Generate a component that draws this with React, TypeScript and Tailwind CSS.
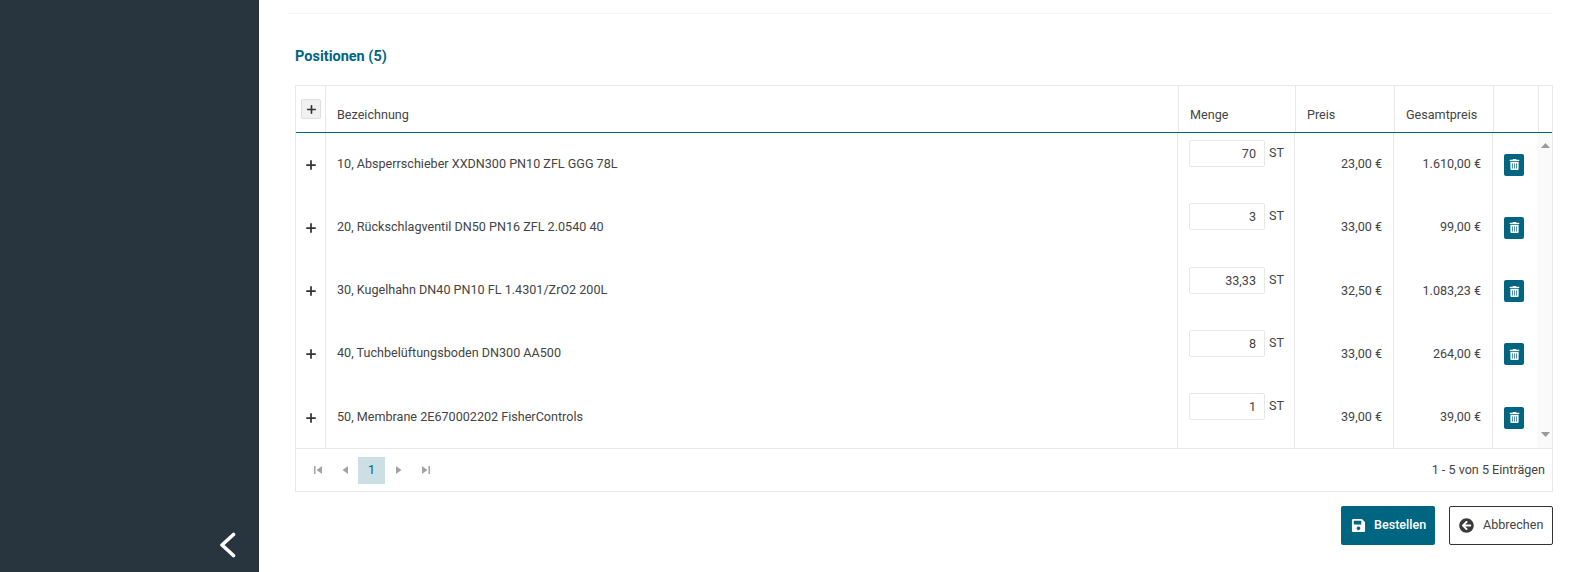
import React from 'react';
import { Plus } from 'lucide-react';
import { FaSave, FaArrowCircleLeft, FaTrashAlt } from 'react-icons/fa';

const rows = [
  { name: '10, Absperrschieber XXDN300 PN10 ZFL GGG 78L', qty: '70', price: '23,00 €', total: '1.610,00 €' },
  { name: '20, Rückschlagventil DN50 PN16 ZFL 2.0540 40', qty: '3', price: '33,00 €', total: '99,00 €' },
  { name: '30, Kugelhahn DN40 PN10 FL 1.4301/ZrO2 200L', qty: '33,33', price: '32,50 €', total: '1.083,23 €' },
  { name: '40, Tuchbelüftungsboden DN300 AA500', qty: '8', price: '33,00 €', total: '264,00 €' },
  { name: '50, Membrane 2E670002202 FisherControls', qty: '1', price: '39,00 €', total: '39,00 €' },
];

const PagerIcon = ({ kind }: { kind: 'first' | 'prev' | 'next' | 'last' }) => (
  <span className="flex h-[27px] w-[27px] items-center justify-center">
    <svg width="10" height="10" viewBox="0 0 10 10" fill="#a3a3a3">
      {kind === 'first' && <path d="M1 1h1.5v8H1zM9 1v8L3.5 5z" />}
      {kind === 'prev' && <path d="M8 1v8L2.5 5z" />}
      {kind === 'next' && <path d="M2 1v8l5.5-4z" />}
      {kind === 'last' && <path d="M1 1v8l5.5-4zM7.5 1H9v8H7.5z" />}
    </svg>
  </span>
);

const App = () => {
  return (
    <div className="flex h-[572px] w-[1595px] overflow-hidden bg-white font-['Roboto',sans-serif] text-[12.6px] text-[#444]">
      <aside className="flex w-[259px] shrink-0 items-end justify-end bg-[#28353f] pb-[14px] pr-[23px]">
        <svg width="16" height="26" viewBox="0 0 16 26" fill="none" stroke="white" strokeWidth="3.6" strokeLinecap="round" strokeLinejoin="round">
          <polyline points="13.5,2.5 2,13 13.5,23.5" />
        </svg>
      </aside>

      <main className="flex-1 pl-[36px] pr-[42px]">
        <div className="-ml-[7px] mt-[13px] h-px bg-[#f4f4f4]" />
        <h2 className="mt-[34px] text-[14.5px] leading-[17px] font-bold text-[#006580]">Positionen (5)</h2>

        <div className="mt-[20px] border border-[#e8e8e8]">
          {/* Kopfzeile */}
          <div className="flex h-[47px] border-b border-[#006580]">
            <div className="w-[30px] shrink-0 border-r border-[#e8e8e8] pl-[5px] pt-[13px]">
              <span className="flex h-[20px] w-[20px] items-center justify-center rounded-[2px] border border-[#dedede] bg-[#f1f1f1] text-[#333]">
                <Plus className="h-[13px] w-[13px]" strokeWidth={3} />
              </span>
            </div>
            <div className="flex flex-1 items-end border-r border-[#e8e8e8] pb-[9px] pl-[11px] leading-[16px]">Bezeichnung</div>
            <div className="flex w-[117px] shrink-0 items-end border-r border-[#e8e8e8] pb-[9px] pl-[11px] leading-[16px]">Menge</div>
            <div className="flex w-[99px] shrink-0 items-end border-r border-[#e8e8e8] pb-[9px] pl-[11px] leading-[16px]">Preis</div>
            <div className="flex w-[99px] shrink-0 items-end border-r border-[#e8e8e8] pb-[9px] pl-[11px] leading-[16px]">Gesamtpreis</div>
            <div className="w-[45px] shrink-0 border-r border-[#e8e8e8]" />
            <div className="w-[13px] shrink-0" />
          </div>

          {/* Zeilen */}
          <div className="relative h-[316px] overflow-hidden border-b border-[#e8e8e8]">
            {rows.map((row) => (
              <div key={row.name} className="flex h-[63.25px]">
                <div className="flex w-[30px] shrink-0 items-center justify-center border-r border-[#e8e8e8] text-[#333]">
                  <Plus className="h-[14px] w-[14px]" strokeWidth={3} />
                </div>
                <div className="flex flex-1 items-center border-r border-[#e8e8e8] pb-[1px] pl-[11px]">{row.name}</div>
                <div className="flex w-[117px] shrink-0 items-start border-r border-[#e8e8e8] pl-[11px] pt-[7px]">
                  <input
                    readOnly
                    value={row.qty}
                    className="h-[27px] w-[76px] rounded-[2px] border border-[#e8e8e8] bg-white pr-[8px] text-right text-[#444] outline-none"
                  />
                  <span className="ml-[4px] mt-[5px] leading-[16px]">ST</span>
                </div>
                <div className="flex w-[99px] shrink-0 items-center justify-end border-r border-[#e8e8e8] pr-[11px]">{row.price}</div>
                <div className="flex w-[99px] shrink-0 items-center justify-end border-r border-[#e8e8e8] pr-[11px]">{row.total}</div>
                <div className="flex w-[44px] shrink-0 items-center pl-[11px]">
                  <button className="flex h-[22px] w-[20px] items-center justify-center rounded-[2px] bg-[#006580] text-white">
                    <FaTrashAlt className="h-[11px] w-[11px]" />
                  </button>
                </div>
                <div className="w-[15px] shrink-0" />
              </div>
            ))}
            {/* Scrollleiste */}
            <div className="absolute inset-y-0 right-0 flex w-[15px] flex-col items-center justify-between bg-[#fafafa] pb-[11px] pl-[2px] pt-[10px]">
              <svg width="9" height="5" viewBox="0 0 9 5" fill="#999"><path d="M4.5 0L9 5H0z" /></svg>
              <svg width="9" height="5" viewBox="0 0 9 5" fill="#999"><path d="M0 0h9L4.5 5z" /></svg>
            </div>
          </div>

          {/* Pager */}
          <div className="flex h-[42px] items-center pl-[8px] pr-[7px]">
            <PagerIcon kind="first" />
            <PagerIcon kind="prev" />
            <span className="flex h-[27px] w-[27px] items-center justify-center bg-[#cbdfe5] text-[#006580]">1</span>
            <PagerIcon kind="next" />
            <PagerIcon kind="last" />
            <span className="ml-auto">1 - 5 von 5 Einträgen</span>
          </div>
        </div>

        <div className="mt-[14px] flex justify-end gap-[14px]">
          <button className="flex h-[39px] w-[94px] items-center gap-[8px] rounded-[2px] bg-[#006580] pl-[10px] font-medium text-white">
            <FaSave className="h-[15px] w-[15px]" />
            Bestellen
          </button>
          <button className="flex h-[39px] w-[104px] items-center gap-[9px] rounded-[2px] border border-[#333] bg-white pl-[9px] text-[#444]">
            <FaArrowCircleLeft className="h-[15px] w-[15px] text-[#3a3a3a]" />
            Abbrechen
          </button>
        </div>
      </main>
    </div>
  );
};

export default App;
